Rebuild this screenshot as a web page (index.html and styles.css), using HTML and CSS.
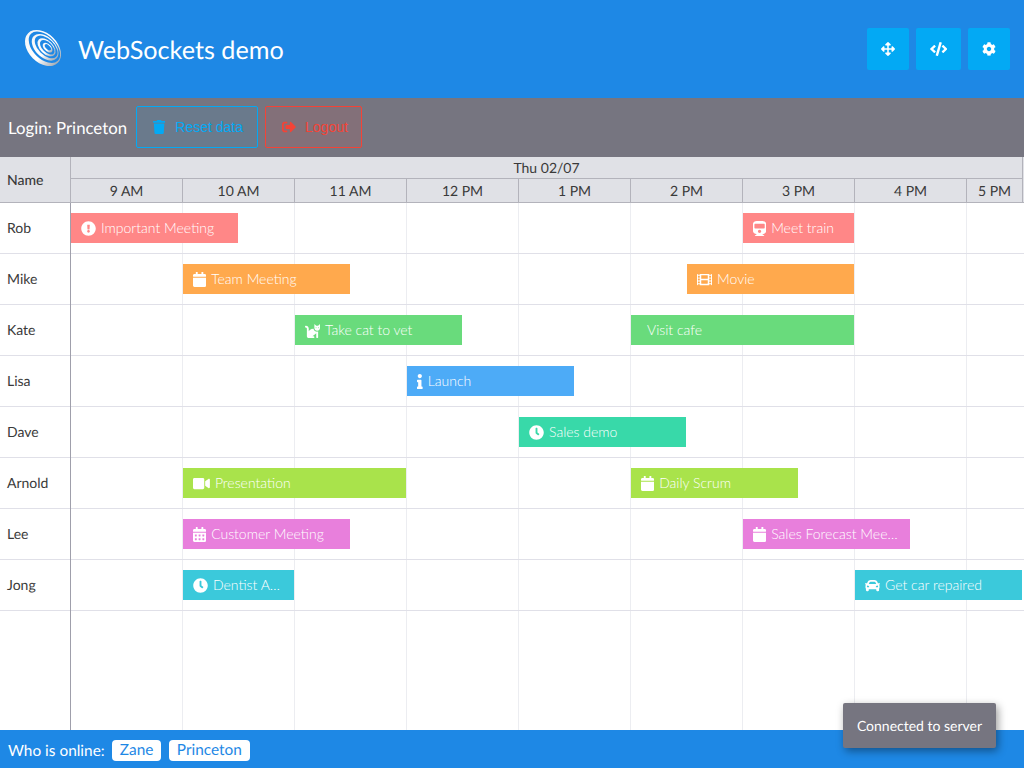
FILE: index.html
```html
<!DOCTYPE html>
<html>
<head>
    <title>WebSockets demo</title>
    <meta charset="utf-8">
    <link rel="stylesheet" href="styles.css">
</head>
<body>
    <svg class="sprite" xmlns="http://www.w3.org/2000/svg">
        <defs>
            <path id="i-exclamation" d="M504 256c0 136.997-111.043 248-248 248S8 392.997 8 256C8 119.083 119.043 8 256 8s248 111.083 248 248zm-248 50c-25.405 0-46 20.595-46 46s20.595 46 46 46 46-20.595 46-46-20.595-46-46-46zm-43.673-165.346l7.418 136c.347 6.364 5.609 11.346 11.982 11.346h48.546c6.373 0 11.635-4.982 11.982-11.346l7.418-136c.375-6.874-5.098-12.654-11.982-12.654h-63.383c-6.884 0-12.356 5.78-11.981 12.654z"/>
            <path id="i-clock" d="M256,8C119,8,8,119,8,256S119,504,256,504,504,393,504,256,393,8,256,8Zm92.49,313h0l-20,25a16,16,0,0,1-22.49,2.5h0l-67-49.72a40,40,0,0,1-15-31.23V112a16,16,0,0,1,16-16h32a16,16,0,0,1,16,16V256l58,42.5A16,16,0,0,1,348.49,321Z"/>
            <path id="i-calendar" d="M12 192h424c6.6 0 12 5.4 12 12v260c0 26.5-21.5 48-48 48H48c-26.5 0-48-21.5-48-48V204c0-6.6 5.4-12 12-12zm436-44v-36c0-26.5-21.5-48-48-48h-48V12c0-6.6-5.4-12-12-12h-40c-6.6 0-12 5.4-12 12v52H160V12c0-6.6-5.4-12-12-12h-40c-6.6 0-12 5.4-12 12v52H48C21.5 64 0 85.5 0 112v36c0 6.6 5.4 12 12 12h424c6.6 0 12-5.4 12-12z"/>
            <path id="i-calendar-alt" d="M0 464c0 26.5 21.5 48 48 48h352c26.5 0 48-21.5 48-48V192H0v272zm320-196c0-6.6 5.4-12 12-12h40c6.6 0 12 5.4 12 12v40c0 6.6-5.4 12-12 12h-40c-6.6 0-12-5.4-12-12v-40zm0 128c0-6.6 5.4-12 12-12h40c6.6 0 12 5.4 12 12v40c0 6.6-5.4 12-12 12h-40c-6.6 0-12-5.4-12-12v-40zM192 268c0-6.6 5.4-12 12-12h40c6.6 0 12 5.4 12 12v40c0 6.6-5.4 12-12 12h-40c-6.6 0-12-5.4-12-12v-40zm0 128c0-6.6 5.4-12 12-12h40c6.6 0 12 5.4 12 12v40c0 6.6-5.4 12-12 12h-40c-6.6 0-12-5.4-12-12v-40zM64 268c0-6.6 5.4-12 12-12h40c6.6 0 12 5.4 12 12v40c0 6.6-5.4 12-12 12H76c-6.6 0-12-5.4-12-12v-40zm0 128c0-6.6 5.4-12 12-12h40c6.6 0 12 5.4 12 12v40c0 6.6-5.4 12-12 12H76c-6.6 0-12-5.4-12-12v-40zM400 64h-48V16c0-8.8-7.2-16-16-16h-32c-8.8 0-16 7.2-16 16v48H160V16c0-8.8-7.2-16-16-16h-32c-8.8 0-16 7.2-16 16v48H48C21.5 64 0 85.5 0 112v48h448v-48c0-26.5-21.5-48-48-48z"/>
            <path id="i-video" d="M336.2 64H47.8C21.4 64 0 85.4 0 111.8v288.4C0 426.6 21.4 448 47.8 448h288.4c26.4 0 47.8-21.4 47.8-47.8V111.8c0-26.4-21.4-47.8-47.8-47.8zm189.4 37.7L416 177.3v157.4l109.6 75.5c21.2 14.6 50.4-.3 50.4-25.8V127.5c0-25.4-29.1-40.4-50.4-25.8z"/>
            <path id="i-info" d="M20 424.229h20V279.771H20c-11.046 0-20-8.954-20-20V212c0-11.046 8.954-20 20-20h112c11.046 0 20 8.954 20 20v212.229h20c11.046 0 20 8.954 20 20V492c0 11.046-8.954 20-20 20H20c-11.046 0-20-8.954-20-20v-47.771c0-11.046 8.954-20 20-20zM96 0C56.235 0 24 32.235 24 72s32.235 72 72 72 72-32.235 72-72S135.764 0 96 0z"/>
            <path id="i-trash" d="M432 32H312l-9.4-18.7A24 24 0 0 0 281.1 0H166.8a23.72 23.72 0 0 0-21.4 13.3L136 32H16A16 16 0 0 0 0 48v32a16 16 0 0 0 16 16h416a16 16 0 0 0 16-16V48a16 16 0 0 0-16-16zM53.2 467a48 48 0 0 0 47.9 45h245.8a48 48 0 0 0 47.9-45L416 128H32z"/>
            <path id="i-signout" d="M497 273L329 441c-15 15-41 4.5-41-17v-96H152c-13.3 0-24-10.7-24-24v-96c0-13.3 10.7-24 24-24h136V88c0-21.4 25.9-32 41-17l168 168c9.3 9.4 9.3 24.6 0 34zM192 436v-40c0-6.6-5.4-12-12-12H96c-17.7 0-32-14.3-32-32V160c0-17.7 14.3-32 32-32h84c6.6 0 12-5.4 12-12V76c0-6.6-5.4-12-12-12H96c-53 0-96 43-96 96v192c0 53 43 96 96 96h84c6.6 0 12-5.4 12-12z"/>
            <path id="i-code" d="M278.9 511.5l-61-17.7c-6.4-1.8-10-8.5-8.2-14.9L346.2 8.7c1.8-6.4 8.5-10 14.9-8.2l61 17.7c6.4 1.8 10 8.5 8.2 14.9L293.8 503.3c-1.9 6.4-8.5 10.1-14.9 8.2zm-114-112.2l43.5-46.4c4.6-4.9 4.3-12.7-.8-17.2L117 256l90.6-79.7c5.1-4.5 5.5-12.3.8-17.2l-43.5-46.4c-4.5-4.8-12.1-5.1-17-.5L3.8 247.2c-5.1 4.7-5.1 12.8 0 17.5l144.1 135.1c4.9 4.6 12.5 4.4 17-.5zm327.2.6l144.1-135.1c5.1-4.7 5.1-12.8 0-17.5L492.1 112.1c-4.8-4.5-12.4-4.3-17 .5L431.6 159c-4.6 4.9-4.3 12.7.8 17.2L523 256l-90.6 79.7c-5.1 4.5-5.5 12.3-.8 17.2l43.5 46.4c4.5 4.9 12.1 5.1 17 .6z"/>
            <path id="i-cog" d="M487.4 315.7l-42.6-24.6c4.3-23.2 4.3-47 0-70.2l42.6-24.6c4.9-2.8 7.1-8.6 5.5-14-11.1-35.6-30-67.8-54.7-94.6-3.8-4.1-10-5.1-14.8-2.3L380.8 110c-17.9-15.4-38.5-27.3-60.8-35.1V25.8c0-5.6-3.9-10.5-9.4-11.7-36.7-8.2-74.3-7.8-109.2 0-5.5 1.2-9.4 6.1-9.4 11.7V75c-22.2 7.9-42.8 19.8-60.8 35.1L88.7 85.5c-4.9-2.8-11-1.9-14.8 2.3-24.7 26.7-43.6 58.9-54.7 94.6-1.7 5.4.6 11.2 5.5 14L67.3 221c-4.3 23.2-4.3 47 0 70.2l-42.6 24.6c-4.9 2.8-7.1 8.6-5.5 14 11.1 35.6 30 67.8 54.7 94.6 3.8 4.1 10 5.1 14.8 2.3l42.6-24.6c17.9 15.4 38.5 27.3 60.8 35.1v49.2c0 5.6 3.9 10.5 9.4 11.7 36.7 8.2 74.3 7.8 109.2 0 5.5-1.2 9.4-6.1 9.4-11.7v-49.2c22.2-7.9 42.8-19.8 60.8-35.1l42.6 24.6c4.9 2.8 11 1.9 14.8-2.3 24.7-26.7 43.6-58.9 54.7-94.6 1.5-5.5-.7-11.3-5.6-14.1zM256 336c-44.1 0-80-35.9-80-80s35.9-80 80-80 80 35.9 80 80-35.9 80-80 80z"/>
            <path id="i-arrows" d="M352.201 425.775l-79.196 79.196c-9.373 9.373-24.568 9.373-33.941 0l-79.196-79.196c-15.119-15.119-4.411-40.971 16.971-40.97h51.162L228 284H127.196v51.162c0 21.382-25.851 32.09-40.971 16.971L7.029 272.937c-9.373-9.373-9.373-24.569 0-33.941L86.225 159.8c15.119-15.119 40.971-4.411 40.971 16.971V228H228V127.196h-51.23c-21.382 0-32.09-25.851-16.971-40.971l79.196-79.196c9.373-9.373 24.568-9.373 33.941 0l79.196 79.196c15.119 15.119 4.411 40.971-16.971 40.971h-51.162V228h100.804v-51.162c0-21.382 25.851-32.09 40.97-16.971l79.196 79.196c9.373 9.373 9.373 24.569 0 33.941L425.773 352.2c-15.119 15.119-40.971 4.411-40.97-16.971V284H284v100.804h51.23c21.382 0 32.09 25.851 16.971 40.971z"/>
            <path id="i-train" d="M448 96v256c0 51.815-61.624 96-130.022 96l62.98 49.721C386.905 502.417 383.562 512 376 512H72c-7.578 0-10.892-9.594-4.957-14.279L130.022 448C61.82 448 0 403.954 0 352V96C0 42.981 64 0 128 0h192c65 0 128 42.981 128 96zm-48 136V120c0-13.255-10.745-24-24-24H72c-13.255 0-24 10.745-24 24v112c0 13.255 10.745 24 24 24h304c13.255 0 24-10.745 24-24zm-176 64c-30.928 0-56 25.072-56 56s25.072 56 56 56 56-25.072 56-56-25.072-56-56-56z"/>
            <path id="i-film" d="M488 64h-8v20c0 6.6-5.4 12-12 12h-40c-6.6 0-12-5.4-12-12V64H96v20c0 6.6-5.4 12-12 12H44c-6.6 0-12-5.4-12-12V64h-8C10.7 64 0 74.7 0 88v336c0 13.3 10.7 24 24 24h8v-20c0-6.6 5.4-12 12-12h40c6.6 0 12 5.4 12 12v20h320v-20c0-6.6 5.4-12 12-12h40c6.6 0 12 5.4 12 12v20h8c13.3 0 24-10.7 24-24V88c0-13.3-10.7-24-24-24zM96 372c0 6.6-5.4 12-12 12H44c-6.6 0-12-5.4-12-12v-40c0-6.6 5.4-12 12-12h40c6.6 0 12 5.4 12 12v40zm0-96c0 6.6-5.4 12-12 12H44c-6.6 0-12-5.4-12-12v-40c0-6.6 5.4-12 12-12h40c6.6 0 12 5.4 12 12v40zm0-96c0 6.6-5.4 12-12 12H44c-6.6 0-12-5.4-12-12v-40c0-6.6 5.4-12 12-12h40c6.6 0 12 5.4 12 12v40zm272 208c0 6.6-5.4 12-12 12H156c-6.6 0-12-5.4-12-12v-96c0-6.6 5.4-12 12-12h200c6.6 0 12 5.4 12 12v96zm0-168c0 6.6-5.4 12-12 12H156c-6.6 0-12-5.4-12-12v-96c0-6.6 5.4-12 12-12h200c6.6 0 12 5.4 12 12v96zm112 152c0 6.6-5.4 12-12 12h-40c-6.6 0-12-5.4-12-12v-40c0-6.6 5.4-12 12-12h40c6.6 0 12 5.4 12 12v40zm0-96c0 6.6-5.4 12-12 12h-40c-6.6 0-12-5.4-12-12v-40c0-6.6 5.4-12 12-12h40c6.6 0 12 5.4 12 12v40zm0-96c0 6.6-5.4 12-12 12h-40c-6.6 0-12-5.4-12-12v-40c0-6.6 5.4-12 12-12h40c6.6 0 12 5.4 12 12v40z"/>
            <path id="i-car" d="M499.99 176h-59.87l-16.64-41.6C406.38 91.63 365.57 64 319.5 64h-127c-46.06 0-86.88 27.63-103.99 70.4L71.87 176H12.01C4.2 176-1.53 183.34.37 190.91l6 24C7.7 220.25 12.5 224 18.01 224h20.07C24.65 235.73 16 252.78 16 272v48c0 16.12 6.16 30.67 16 41.93V416c0 17.67 14.33 32 32 32h32c17.67 0 32-14.33 32-32v-32h256v32c0 17.67 14.33 32 32 32h32c17.67 0 32-14.33 32-32v-54.07c9.84-11.25 16-25.8 16-41.93v-48c0-19.22-8.65-36.27-22.07-48H494c5.51 0 10.31-3.75 11.64-9.09l6-24c1.89-7.57-3.84-14.91-11.65-14.91zm-352.06-17.83c7.29-18.22 24.94-30.17 44.57-30.17h127c19.63 0 37.28 11.95 44.57 30.17L384 208H128l19.93-49.83zM96 319.8c-19.2 0-32-12.76-32-31.9S76.8 256 96 256s48 28.71 48 47.85-28.8 15.95-48 15.95zm320 0c-19.2 0-48 3.19-48-15.95S396.8 256 416 256s32 12.76 32 31.9-12.8 31.9-32 31.9z"/>
            <path id="i-cat" d="M290.59 192c-20.18 0-106.82 1.98-162.59 85.95V192c0-52.94-43.06-96-96-96-17.67 0-32 14.33-32 32s14.33 32 32 32c17.64 0 32 14.36 32 32v256c0 35.3 28.7 64 64 64h176c8.84 0 16-7.16 16-16v-16c0-17.67-14.33-32-32-32h-32l128-96v144c0 8.84 7.16 16 16 16h32c8.84 0 16-7.16 16-16V289.86c-10.29 2.67-20.89 4.54-32 4.54-61.81 0-113.52-44.05-125.41-102.4zM448 96h-64l-64-64v134.4c0 53.02 42.98 96 96 96s96-42.98 96-96V32l-64 64zm-72 80c-8.84 0-16-7.16-16-16s7.16-16 16-16 16 7.16 16 16-7.16 16-16 16zm80 0c-8.84 0-16-7.16-16-16s7.16-16 16-16 16 7.16 16 16-7.16 16-16 16z"/>
            <linearGradient id="logo-grad" x1="0" y1="0" x2="1" y2="0">
                <stop offset="0" stop-color="#f4f6f8"/>
                <stop offset="0.6" stop-color="#ffffff"/>
                <stop offset="1" stop-color="#a3abb4"/>
            </linearGradient>
        </defs>
    </svg>

    <div class="app">
        <header class="topbar">
            <svg class="logo" viewBox="0 0 36 36">
                <g transform="rotate(45 18 18)">
                    <ellipse class="swirl" cx="18" cy="18" rx="21" ry="14.5"/>
                    <ellipse class="gap" cx="18.5" cy="16.5" rx="19" ry="11.5"/>
                    <ellipse class="swirl" cx="19" cy="16" rx="16" ry="10"/>
                    <ellipse class="gap" cx="19.5" cy="15" rx="14" ry="8"/>
                    <ellipse class="swirl" cx="20" cy="15" rx="11" ry="6.5"/>
                    <ellipse class="gap" cx="20.5" cy="14.5" rx="9" ry="5"/>
                    <ellipse class="swirl" cx="21" cy="14.5" rx="6" ry="3.5"/>
                    <ellipse class="gap" cx="21" cy="14" rx="4" ry="2"/>
                </g>
            </svg>
            <h1 class="title">WebSockets demo</h1>
            <div class="top-actions">
                <button class="top-btn"><svg class="ico" viewBox="0 0 512 512"><use href="#i-arrows"/></svg></button>
                <button class="top-btn wide"><svg class="ico" viewBox="0 0 640 512"><use href="#i-code"/></svg></button>
                <button class="top-btn"><svg class="ico" viewBox="0 0 512 512"><use href="#i-cog"/></svg></button>
            </div>
        </header>

        <div class="toolbar">
            <span class="login">Login: Princeton</span>
            <button class="tool-btn reset"><svg class="ico" viewBox="0 0 448 512"><use href="#i-trash"/></svg>Reset data</button>
            <button class="tool-btn logout"><svg class="ico" viewBox="0 0 512 512"><use href="#i-signout"/></svg>Logout</button>
        </div>

        <div class="sched-head">
            <div class="name-head">Name</div>
            <div class="time-head">
                <div class="day">Thu 02/07</div>
                <div class="hours">
                    <div class="hour">9 AM</div>
                    <div class="hour">10 AM</div>
                    <div class="hour">11 AM</div>
                    <div class="hour">12 PM</div>
                    <div class="hour">1 PM</div>
                    <div class="hour">2 PM</div>
                    <div class="hour">3 PM</div>
                    <div class="hour">4 PM</div>
                    <div class="hour half">5 PM</div>
                </div>
            </div>
        </div>

        <div class="sched-body">
            <div class="names">
                <div class="name">Rob</div>
                <div class="name">Mike</div>
                <div class="name">Kate</div>
                <div class="name">Lisa</div>
                <div class="name">Dave</div>
                <div class="name">Arnold</div>
                <div class="name">Lee</div>
                <div class="name">Jong</div>
            </div>
            <div class="timeline">
                <div class="row">
                    <div class="event red" style="left:0;width:167px"><svg class="ico" viewBox="0 0 512 512"><use href="#i-exclamation"/></svg><span>Important Meeting</span></div>
                    <div class="event red" style="left:672px;width:111px"><svg class="ico" viewBox="0 0 448 512"><use href="#i-train"/></svg><span>Meet train</span></div>
                </div>
                <div class="row">
                    <div class="event orange" style="left:112px;width:167px"><svg class="ico" viewBox="0 0 448 512"><use href="#i-calendar"/></svg><span>Team Meeting</span></div>
                    <div class="event orange" style="left:616px;width:167px"><svg class="ico" viewBox="0 0 512 512"><use href="#i-film"/></svg><span>Movie</span></div>
                </div>
                <div class="row">
                    <div class="event green" style="left:224px;width:167px"><svg class="ico" viewBox="0 0 512 512"><use href="#i-cat"/></svg><span>Take cat to vet</span></div>
                    <div class="event green no-icon" style="left:560px;width:223px"><span>Visit cafe</span></div>
                </div>
                <div class="row">
                    <div class="event blue" style="left:336px;width:167px"><svg class="ico" viewBox="0 0 192 512"><use href="#i-info"/></svg><span>Launch</span></div>
                </div>
                <div class="row">
                    <div class="event teal" style="left:448px;width:167px"><svg class="ico" viewBox="0 0 512 512"><use href="#i-clock"/></svg><span>Sales demo</span></div>
                </div>
                <div class="row">
                    <div class="event lime" style="left:112px;width:223px"><svg class="ico" viewBox="0 0 576 512"><use href="#i-video"/></svg><span>Presentation</span></div>
                    <div class="event lime" style="left:560px;width:167px"><svg class="ico" viewBox="0 0 448 512"><use href="#i-calendar"/></svg><span>Daily Scrum</span></div>
                </div>
                <div class="row">
                    <div class="event pink" style="left:112px;width:167px"><svg class="ico" viewBox="0 0 448 512"><use href="#i-calendar-alt"/></svg><span>Customer Meeting</span></div>
                    <div class="event pink" style="left:672px;width:167px"><svg class="ico" viewBox="0 0 448 512"><use href="#i-calendar"/></svg><span>Sales Forecast Mee…</span></div>
                </div>
                <div class="row">
                    <div class="event cyan" style="left:112px;width:111px"><svg class="ico" viewBox="0 0 512 512"><use href="#i-clock"/></svg><span>Dentist A…</span></div>
                    <div class="event cyan" style="left:784px;width:167px"><svg class="ico" viewBox="0 0 512 512"><use href="#i-car"/></svg><span>Get car repaired</span></div>
                </div>
            </div>
        </div>

        <footer class="footer">
            <span class="online">Who is online:</span>
            <span class="user">Zane</span>
            <span class="user">Princeton</span>
        </footer>
    </div>

    <div class="toast">Connected to server</div>
</body>
</html>
```

FILE: styles.css
```css
* {
    box-sizing: border-box;
}

body {
    margin: 0;
    font-family: Lato, sans-serif;
    font-size: 14px;
    color: #3a3a3a;
    text-rendering: geometricPrecision;
    overflow: hidden;
}

.sprite {
    position: absolute;
    width: 0;
    height: 0;
}

.app {
    display: flex;
    flex-direction: column;
    height: 100vh;
}

.ico {
    height: 15px;
    width: auto;
    flex: none;
    fill: currentColor;
}

/* top bar */
.topbar {
    flex: none;
    height: 98px;
    display: flex;
    align-items: center;
    padding: 0 14px 0 25px;
    background: #1e88e5;
    color: #fff;
}

.logo {
    width: 36px;
    height: 36px;
    margin-bottom: 2px;
    overflow: visible;
}

.swirl {
    fill: url(#logo-grad);
}

.gap {
    fill: #1e88e5;
}

.title {
    margin: 2px 0 0 17px;
    font-size: 25.2px;
    font-weight: 400;
}

.top-actions {
    display: flex;
    gap: 7px;
    margin-left: auto;
}

.top-btn {
    display: flex;
    align-items: center;
    justify-content: center;
    width: 42px;
    height: 42px;
    padding: 0;
    border: none;
    border-radius: 2px;
    background: #03a9f4;
    color: #fff;
}

.top-btn.wide {
    width: 45px;
}

.top-btn .ico {
    height: 14px;
}

/* login bar */
.toolbar {
    flex: none;
    height: 59px;
    display: flex;
    align-items: center;
    gap: 7px;
    padding: 0 0 1px 8px;
    background: #767580;
    color: #fff;
}

.login {
    margin-right: 2px;
    font-size: 16.8px;
}

.tool-btn {
    display: flex;
    align-items: center;
    height: 42px;
    padding: 0 0 0 16px;
    border: 1px solid;
    border-radius: 2px;
    font-family: "Liberation Sans", Arial, sans-serif;
    font-size: 14px;
}

.tool-btn .ico {
    height: 14px;
    margin-right: 10px;
}

.tool-btn.reset {
    width: 122px;
    border-color: #03a9f4;
    background: rgba(3, 169, 244, 0.1);
    color: #03a9f4;
}

.tool-btn.logout {
    width: 97px;
    border-color: #f44336;
    background: rgba(244, 67, 54, 0.1);
    color: #f44336;
}

.tool-btn.logout .ico {
    margin-right: 9px;
}

/* schedule header */
.sched-head {
    flex: none;
    height: 46px;
    display: flex;
    background: #e0e1e6;
    border-bottom: 1px solid #b3b3bb;
}

.name-head {
    width: 71px;
    display: flex;
    align-items: center;
    padding-left: 7px;
    border-right: 1px solid #b3b3bb;
    font-weight: 500;
}

.time-head {
    width: 952px;
    border-right: 1px solid #b3b3bb;
}

.day {
    height: 22px;
    padding-top: 2px;
    text-align: center;
    border-bottom: 1px solid #b3b3bb;
}

.hours {
    display: flex;
    height: 23px;
}

.hour {
    width: 112px;
    line-height: 23px;
    text-align: center;
    border-right: 1px solid #b3b3bb;
}

.hour.half {
    width: 55px;
    border-right: none;
}

/* schedule body */
.sched-body {
    flex: 1;
    display: flex;
    min-height: 0;
}

.names {
    width: 71px;
    flex: none;
    border-right: 1px solid #9f9fab;
}

.name {
    height: 51px;
    line-height: 50px;
    padding-left: 7px;
    border-bottom: 1px solid #e0e0e8;
}

.timeline {
    flex: 1;
    background: repeating-linear-gradient(to right, transparent 0, transparent 111px, #ecedf1 111px, #ecedf1 112px);
}

.row {
    position: relative;
    height: 51px;
    border-bottom: 1px solid #e0e0e8;
}

.event {
    position: absolute;
    top: 10px;
    height: 30px;
    display: flex;
    align-items: center;
    gap: 5px;
    padding: 0 10px;
    color: #fff;
    font-weight: 300;
}

.event span {
    padding-bottom: 2px;
    white-space: nowrap;
}

.event.no-icon {
    padding-left: 16px;
}

.red { background: #ff8787; }
.orange { background: #ffa94d; }
.green { background: #69db7c; }
.blue { background: #4dabf7; }
.teal { background: #38d9a9; }
.lime { background: #a9e34b; }
.pink { background: #e87fdc; }
.cyan { background: #3bc9db; }

/* footer */
.footer {
    flex: none;
    height: 38px;
    display: flex;
    align-items: center;
    gap: 8px;
    padding: 3px 0 0 8px;
    background: #1e88e5;
    color: #fff;
    font-size: 15.4px;
}

.online {
    margin-right: -0.6px;
}

.user {
    height: 21px;
    line-height: 21px;
    padding: 0 7.75px;
    border-radius: 4px;
    background: #fff;
    color: #1e88e5;
}

.toast {
    position: absolute;
    left: 843px;
    top: 703px;
    width: 153px;
    height: 45px;
    line-height: 45px;
    text-align: center;
    border-radius: 2px;
    background: #767580;
    color: #fff;
    box-shadow: 2px 3px 8px rgba(0, 0, 0, 0.4);
}
```
